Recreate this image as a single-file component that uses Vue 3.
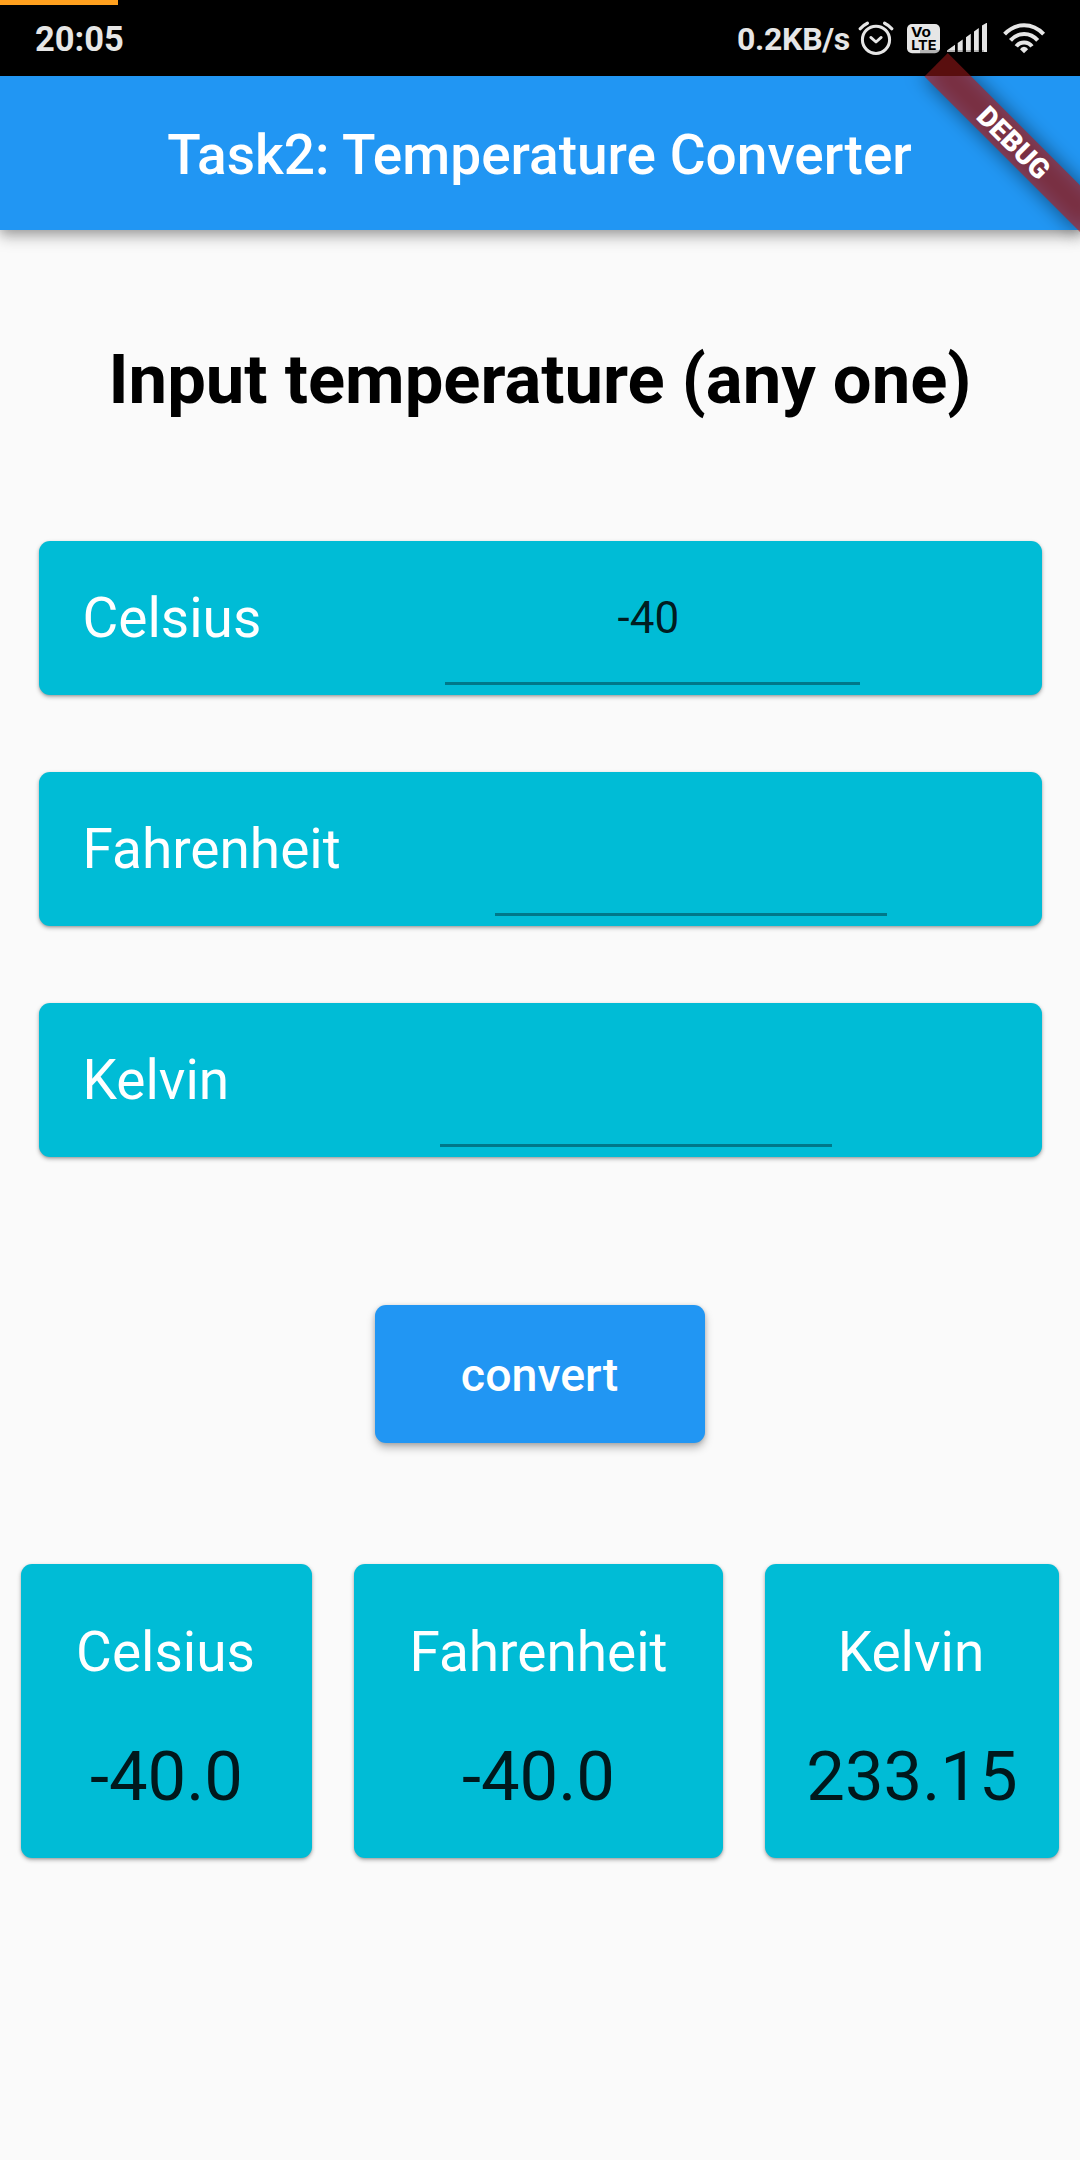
<script setup>
import { ref } from 'vue'

const fields = ref([
  { name: 'Celsius', value: '-40' },
  { name: 'Fahrenheit', value: '' },
  { name: 'Kelvin', value: '' },
])

const results = ref([
  { name: 'Celsius', value: '-40.0' },
  { name: 'Fahrenheit', value: '-40.0' },
  { name: 'Kelvin', value: '233.15' },
])

function convert() {
  const field = fields.value.find((f) => f.value !== '' && !Number.isNaN(Number(f.value)))
  if (!field) return
  const n = Number(field.value)
  const c = field.name === 'Celsius' ? n : field.name === 'Fahrenheit' ? ((n - 32) * 5) / 9 : n - 273.15
  const show = (v) => {
    const r = Math.round(v * 100) / 100
    return Number.isInteger(r) ? r.toFixed(1) : String(r)
  }
  results.value[0].value = show(c)
  results.value[1].value = show((c * 9) / 5 + 32)
  results.value[2].value = show(c + 273.15)
}
</script>

<template>
  <div class="screen">
    <div class="status">
      <div class="progress"></div>
      <span class="clock">20:05</span>
      <div class="indicators">
        <span class="speed">0.2KB/s</span>
        <!-- alarm -->
        <svg class="alarm" width="36" height="36" viewBox="858 20 36 36" fill="none" stroke="#e6e6e6" stroke-linecap="round">
          <circle cx="876" cy="39.8" r="13.6" stroke-width="3" />
          <path d="M860.2 28.8Q863 25.3 867.4 23.2M884.6 23.2Q889 25.3 891.8 28.8" stroke-width="3.2" />
          <path d="M870.8 37.4L876 42L881.2 37.4" stroke-width="2.8" stroke-linejoin="round" />
        </svg>
        <!-- VoLTE -->
        <svg class="volte" width="33" height="30" viewBox="0 0 33 30">
          <rect x="0" y="0" width="33" height="29.3" rx="5" fill="#e6e6e6" />
          <g fill="#000" font-family="Inter, sans-serif" font-weight="700" font-size="13.5">
            <text x="4" y="13" textLength="20" lengthAdjust="spacingAndGlyphs">Vo</text>
            <text x="4.2" y="26.2" textLength="25.3" lengthAdjust="spacingAndGlyphs">LTE</text>
          </g>
        </svg>
        <!-- signal -->
        <svg class="signal" width="41" height="30" viewBox="947 23 41 30" fill="#e6e6e6">
          <path d="M947 52V50.6L955 44.8V52ZM957.7 52V43L962.7 39.4V52ZM966 52V37.2L970.8 33.7V52ZM974 52V31.5L978.8 28V52ZM982 52V25.6L987 22.6V52Z" />
        </svg>
        <!-- wifi -->
        <svg class="wifi" width="44" height="32" viewBox="1002 22 44 32" fill="none" stroke="#e6e6e6" stroke-width="4">
          <path d="M1004.6 34.2Q1013 25.3 1024.1 25.3T1043.6 34.2" />
          <path d="M1010.5 40.4Q1016 34 1024.1 34T1037.7 40.4" />
          <path d="M1016.3 46.4Q1019 42.4 1024.1 42.4T1031.9 46.4" />
          <path d="M1020 49.3Q1021.3 46.8 1024 46.8Q1026.8 46.8 1028.1 49.3L1024 53.3Z" fill="#e6e6e6" stroke="none" />
        </svg>
      </div>
    </div>

    <header class="appbar">
      <h1>Task2: Temperature Converter</h1>
    </header>

    <main>
      <h2>Input temperature (any one)</h2>

      <div class="fields">
        <label v-for="f in fields" :key="f.name" class="field" :class="f.name.toLowerCase()">
          <span>{{ f.name }}</span>
          <input v-model="f.value" type="text" />
        </label>
      </div>

      <button type="button" @click="convert">convert</button>

      <div class="results">
        <div v-for="r in results" :key="r.name" class="result" :class="r.name.toLowerCase()">
          <span class="name">{{ r.name }}</span>
          <span class="value">{{ r.value }}</span>
        </div>
      </div>
    </main>

    <svg class="banner" width="180" height="250" viewBox="900 0 180 250">
      <defs>
        <filter id="soft" x="-30%" y="-100%" width="160%" height="300%">
          <feGaussianBlur stdDeviation="10" />
        </filter>
        <clipPath id="inBar"><rect x="880" y="76" width="200" height="180" /></clipPath>
      </defs>
      <g clip-path="url(#inBar)">
        <rect x="-110" y="77" width="220" height="33" fill="#000" fill-opacity=".5" filter="url(#soft)" transform="translate(1080 76.4) rotate(45)" />
      </g>
      <rect x="-110" y="77" width="220" height="33" fill="#b71c1c" fill-opacity=".627" transform="translate(1080 76.4) rotate(45)" />
      <rect x="920" y="50" width="64" height="26" fill="#000" fill-opacity=".22" />
      <text x="0" y="103.6" fill="#fff" text-anchor="middle" transform="translate(1080 76.4) rotate(45)">DEBUG</text>
    </svg>
  </div>
</template>

<style>
body {
  background: #fafafa;
}
</style>

<style scoped>
.screen {
  position: relative;
  display: flex;
  flex-direction: column;
  width: 1080px;
  height: 2160px;
  overflow: hidden;
  background: #fafafa;
  font-family: Roboto, sans-serif;
}

.status {
  position: relative;
  display: flex;
  justify-content: space-between;
  align-items: center;
  box-sizing: border-box;
  flex: none;
  height: 76px;
  padding: 0 34px 0 35px;
  background: #000;
  color: #e6e6e6;
  font-weight: 700;
}

.progress {
  position: absolute;
  left: 0;
  top: 0;
  width: 118px;
  height: 5px;
  background: #ffa01e;
}

.clock {
  font-size: 34.5px;
  line-height: 40px;
  padding-top: 2px;
}

.indicators {
  display: flex;
  align-items: center;
}

.speed {
  font-size: 32px;
  line-height: 40px;
  letter-spacing: -0.3px;
  padding-top: 2px;
}

.alarm {
  margin-left: 8px;
}

.volte {
  margin: 2px 0 0 13px;
}

.signal {
  margin-left: 7px;
}

.wifi {
  margin-left: 14px;
}

.appbar {
  display: flex;
  justify-content: center;
  align-items: center;
  box-sizing: border-box;
  flex: none;
  height: 154px;
  padding: 4px 1px 0 0;
  background: #2196f3;
  box-shadow: 0 7px 14px rgba(0, 0, 0, 0.27), 0 2px 10px rgba(0, 0, 0, 0.16);
}

h1 {
  margin: 0;
  color: #fff;
  font-size: 55px;
  font-weight: 500;
  line-height: 64px;
}

main {
  display: flex;
  flex-direction: column;
  align-items: center;
}

h2 {
  margin: 109px 0 0;
  color: #000;
  font-size: 68.75px;
  font-weight: 700;
  line-height: 81px;
}

.fields {
  display: flex;
  flex-direction: column;
  gap: 77px;
  width: 1003px;
  margin-top: 121px;
}

.field,
.result {
  border-radius: 11px;
  background: #00bcd6;
  box-shadow: 0 2px 4px rgba(0, 0, 0, 0.3), 0 1px 2px rgba(0, 0, 0, 0.12);
}

.field {
  display: flex;
  align-items: flex-start;
  box-sizing: border-box;
  height: 154px;
  padding-left: 44px;
}

.field span {
  color: #fff;
  font-size: 55px;
  line-height: 154px;
}

.field input {
  box-sizing: border-box;
  width: 392px;
  height: 144px;
  margin-left: 211px;
  padding: 13px 9px 0 0;
  border: 0;
  border-bottom: 3px solid rgba(0, 0, 0, 0.36);
  outline: 0;
  background: transparent;
  color: rgba(0, 0, 0, 0.87);
  font: 44px Roboto, sans-serif;
  text-align: center;
}

.field.celsius input {
  width: 415px;
  margin-left: 184px;
}

.field.fahrenheit input {
  margin-left: 154px;
}

button {
  width: 330px;
  height: 138px;
  margin: 148px 0 0;
  padding: 2px 1px 0 0;
  border: 0;
  border-radius: 11px;
  background: #2196f3;
  box-shadow: 0 5px 8px rgba(0, 0, 0, 0.26), 0 1px 4px rgba(0, 0, 0, 0.16);
  color: #fff;
  font: 500 46.5px Roboto, sans-serif;
}

.results {
  display: flex;
  justify-content: space-between;
  width: 1038px;
  margin-top: 121px;
}

.result {
  display: flex;
  flex-direction: column;
  align-items: center;
  box-sizing: border-box;
  width: 291px;
  height: 294px;
  padding-top: 56px;
}

.result.fahrenheit {
  width: 369px;
}

.result.kelvin {
  width: 294px;
}

.name {
  color: #fff;
  font-size: 55px;
  line-height: 64px;
}

.celsius .name,
.kelvin .name {
  padding-right: 2px;
}

.value {
  margin-top: 52px;
  color: rgba(0, 0, 0, 0.87);
  font-size: 68.75px;
  line-height: 81px;
}

.banner {
  position: absolute;
  top: 0;
  right: 0;
}

.banner text {
  font: 900 28.05px Roboto, sans-serif;
}
</style>
